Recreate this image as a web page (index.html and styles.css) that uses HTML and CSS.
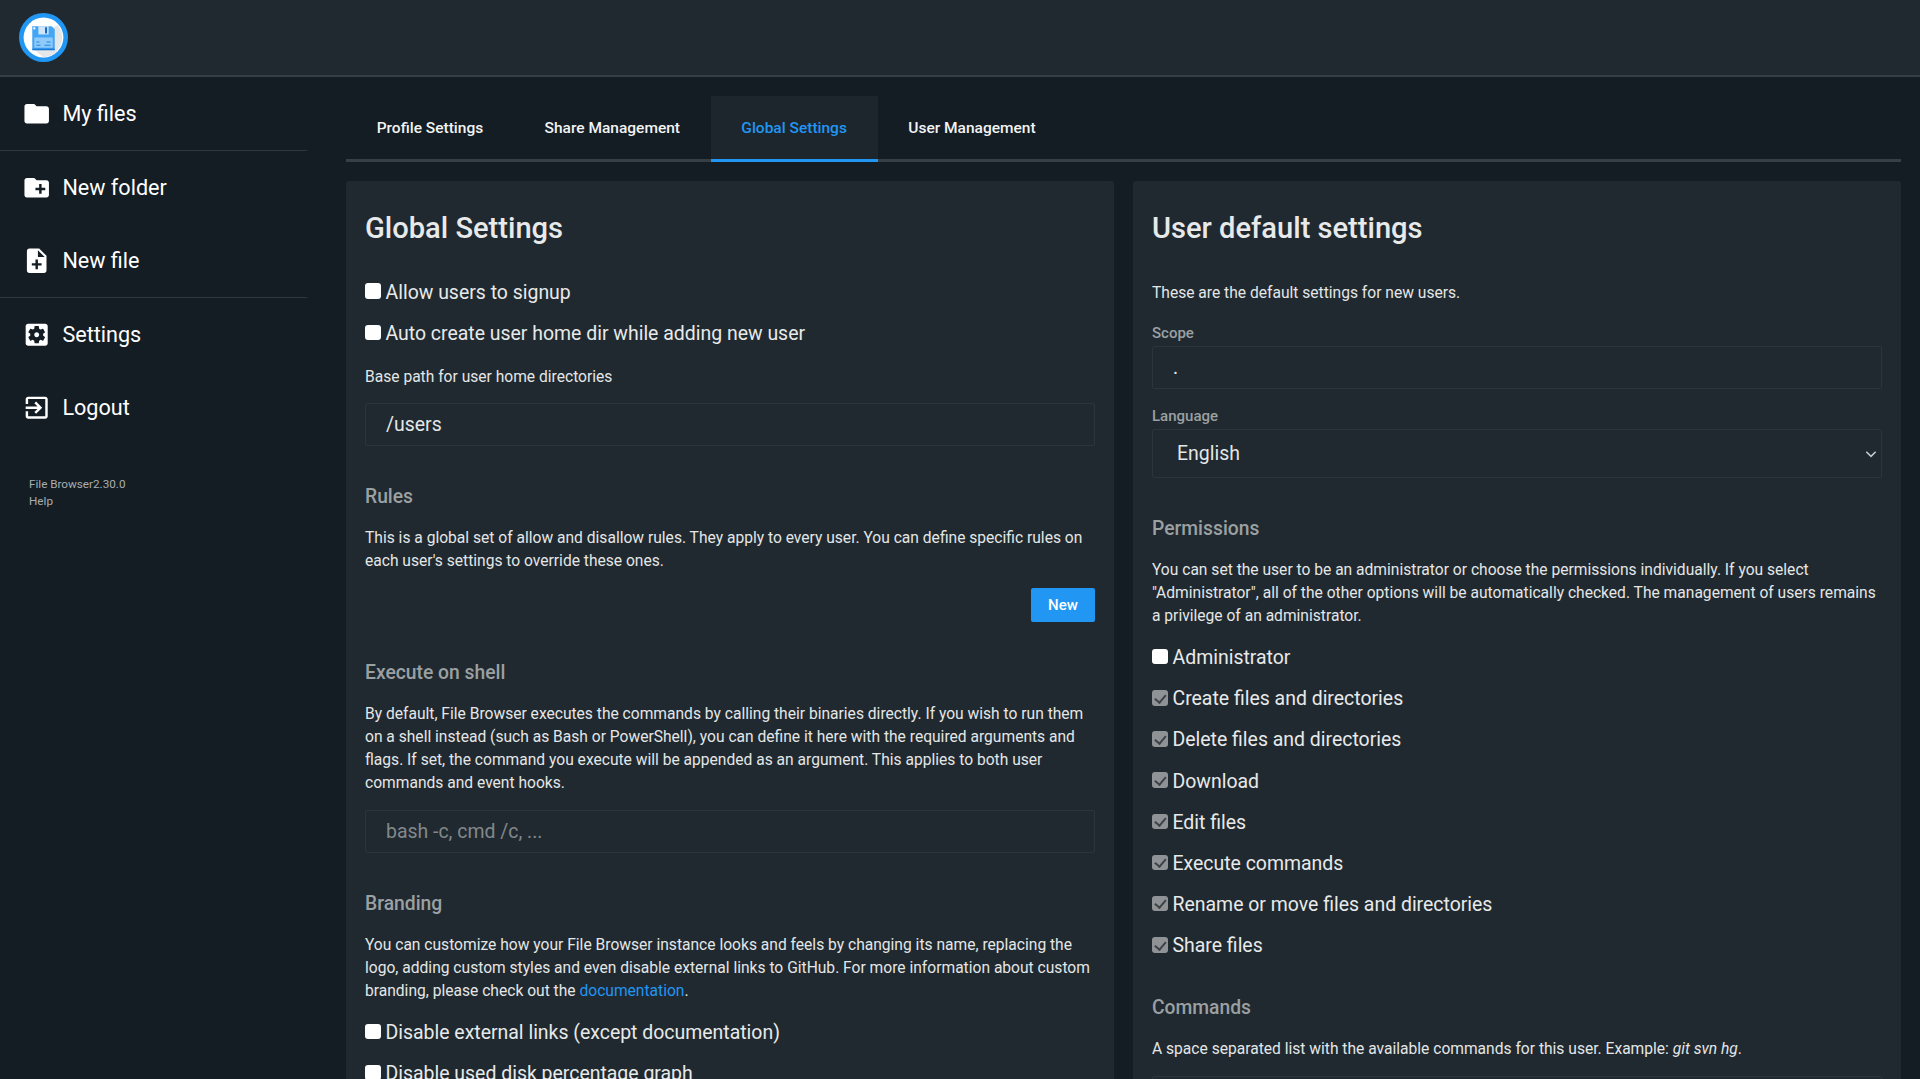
FILE: index.html
```html
<!DOCTYPE html>
<html lang="en">
<head>
    <meta charset="UTF-8">
    <meta name="viewport" content="width=device-width, initial-scale=1.0">
    <title>File Browser - Global Settings</title>
    <link rel="stylesheet" href="styles.css">
</head>
<body>
    <header class="topbar">
        <svg class="logo" viewBox="0 0 48 48">
            <circle cx="24" cy="24" r="24" fill="#2196f3"/>
            <circle cx="24" cy="24" r="19.5" fill="#fff"/>
            <path d="M38 12 A19.5 19.5 0 0 1 24 43.5 L15 36 L35 13z" fill="#e4e6e8"/>
            <path d="M13 13h19l3 3v20H13z" fill="#42a5f5"/>
            <path d="M15 24h18v10H15z" fill="#90caf9"/>
            <path d="M13 35h22v1.500H13z" fill="#1976d2"/>
            <path d="M19 13h10v8H19z" fill="#cfe6fa"/>
            <path d="M25.500 14h2v6h-2z" fill="#1565c0"/>
            <path d="M14 14h2v2h-2z" fill="#fff"/>
            <path d="M17 28h3v1h-3zM27 28h4v1h-4zM17 31h4v1h-4zM25 31h6v1h-6z" fill="#1e88e5"/>
        </svg>
    </header>

    <div class="app">
        <nav class="sidebar">
            <div class="nav-group">
                <a class="nav-item">
                    <svg viewBox="0 0 24 24"><path d="M10 4H4c-1.100 0-1.990.9-1.990 2L2 18c0 1.100.9 2 2 2h16c1.100 0 2-.9 2-2V8c0-1.100-.9-2-2-2h-8l-2-2z"/></svg>
                    <span>My files</span>
                </a>
            </div>
            <div class="nav-group">
                <a class="nav-item">
                    <svg viewBox="0 0 24 24"><path d="M20 6h-8l-2-2H4c-1.110 0-1.990.89-1.990 2L2 18c0 1.110.89 2 2 2h16c1.110 0 2-.89 2-2V8c0-1.110-.89-2-2-2zm-1 8h-3v3h-2v-3h-3v-2h3V9h2v3h3v2z"/></svg>
                    <span>New folder</span>
                </a>
                <a class="nav-item">
                    <svg viewBox="0 0 24 24"><path d="M14 2H6c-1.100 0-1.990.9-1.990 2L4 20c0 1.100.89 2 1.990 2H18c1.100 0 2-.9 2-2V8l-6-6zm2 14h-3v3h-2v-3H8v-2h3v-3h2v3h3v2zm-3-7V3.500L18.500 9H13z"/></svg>
                    <span>New file</span>
                </a>
            </div>
            <div class="nav-group">
                <a class="nav-item">
                    <svg viewBox="0 0 24 24"><path d="M12 10c-1.100 0-2 .9-2 2s.9 2 2 2 2-.9 2-2-.9-2-2-2zm7-7H5c-1.110 0-2 .9-2 2v14c0 1.100.89 2 2 2h14c1.110 0 2-.9 2-2V5c0-1.100-.89-2-2-2zm-1.750 9c0 .23-.02.46-.05.68l1.480 1.160c.13.11.17.3.08.45l-1.400 2.420c-.09.15-.27.21-.43.15l-1.740-.7c-.36.28-.76.51-1.180.69l-.26 1.850c-.03.17-.18.3-.35.3h-2.800c-.17 0-.32-.13-.35-.29l-.26-1.850c-.43-.18-.82-.41-1.180-.69l-1.740.7c-.16.06-.34 0-.43-.15l-1.400-2.420c-.09-.15-.05-.34.08-.45l1.480-1.160c-.03-.23-.05-.46-.05-.69 0-.23.02-.46.05-.68l-1.480-1.160c-.13-.11-.17-.3-.08-.45l1.400-2.420c.09-.15.27-.21.43-.15l1.740.7c.36-.28.76-.51 1.180-.69l.26-1.850c.03-.17.18-.3.35-.3h2.800c.17 0 .32.13.35.29l.26 1.850c.43.18.82.41 1.180.69l1.740-.7c.16-.06.34 0 .43.15l1.400 2.420c.09.15.05.34-.08.45l-1.480 1.160c.03.23.05.46.05.69z"/></svg>
                    <span>Settings</span>
                </a>
                <a class="nav-item">
                    <svg viewBox="0 0 24 24"><path d="M10.090 15.590L11.500 17l5-5-5-5-1.410 1.410L12.670 11H3v2h9.670l-2.580 2.590zM19 3H5c-1.110 0-2 .9-2 2v4h2V5h14v14H5v-4H3v4c0 1.100.89 2 2 2h14c1.100 0 2-.9 2-2V5c0-1.100-.9-2-2-2z"/></svg>
                    <span>Logout</span>
                </a>
                <div class="credits">
                    <div>File Browser2.30.0</div>
                    <div>Help</div>
                </div>
            </div>
        </nav>

        <main class="content">
            <div class="tabs">
                <a class="tab">Profile Settings</a>
                <a class="tab">Share Management</a>
                <a class="tab active">Global Settings</a>
                <a class="tab">User Management</a>
            </div>

            <div class="cards">
                <section class="card">
                    <h2>Global Settings</h2>
                    <div class="checks after-title">
                        <label class="check"><input type="checkbox"> Allow users to signup</label>
                        <label class="check"><input type="checkbox"> Auto create user home dir while adding new user</label>
                    </div>
                    <p class="field-note">Base path for user home directories</p>
                    <input class="text-input base-path" type="text" value="/users">

                    <h3>Rules</h3>
                    <p>This is a global set of allow and disallow rules. They apply to every user. You can define specific rules on each user's settings to override these ones.</p>
                    <div class="actions"><button class="btn">New</button></div>

                    <h3>Execute on shell</h3>
                    <p>By default, File Browser executes the commands by calling their binaries directly. If you wish to run them on a shell instead (such as Bash or PowerShell), you can define it here with the required arguments and flags. If set, the command you execute will be appended as an argument. This applies to both user commands and event hooks.</p>
                    <input class="text-input shell" type="text" placeholder="bash -c, cmd /c, ...">

                    <h3>Branding</h3>
                    <p>You can customize how your File Browser instance looks and feels by changing its name, replacing the logo, adding custom styles and even disable external links to GitHub. For more information about custom branding, please check out the <a class="link">documentation</a>.</p>
                    <div class="checks branding">
                        <label class="check"><input type="checkbox"> Disable external links (except documentation)</label>
                        <label class="check"><input type="checkbox"> Disable used disk percentage graph</label>
                    </div>
                </section>

                <section class="card">
                    <h2>User default settings</h2>
                    <p class="intro">These are the default settings for new users.</p>
                    <label class="field-label scope-label">Scope</label>
                    <input class="text-input" type="text" value=".">
                    <label class="field-label">Language</label>
                    <div class="select">
                        <span>English</span>
                        <svg viewBox="0 0 12 12"><path d="M2 4l4 4 4-4" fill="none" stroke="#c8cbcd" stroke-width="1.300"/></svg>
                    </div>

                    <h3>Permissions</h3>
                    <p>You can set the user to be an administrator or choose the permissions individually. If you select "Administrator", all of the other options will be automatically checked. The management of users remains a privilege of an administrator.</p>
                    <div class="checks perms">
                        <label class="check"><input type="checkbox"> Administrator</label>
                        <label class="check"><input type="checkbox" checked> Create files and directories</label>
                        <label class="check"><input type="checkbox" checked> Delete files and directories</label>
                        <label class="check"><input type="checkbox" checked> Download</label>
                        <label class="check"><input type="checkbox" checked> Edit files</label>
                        <label class="check"><input type="checkbox" checked> Execute commands</label>
                        <label class="check"><input type="checkbox" checked> Rename or move files and directories</label>
                        <label class="check"><input type="checkbox" checked> Share files</label>
                    </div>

                    <h3 class="commands">Commands</h3>
                    <p>A space separated list with the available commands for this user. Example: <i>git svn hg</i>.</p>
                    <input class="text-input commands-input" type="text">
                </section>
            </div>
        </main>
    </div>
</body>
</html>
```

FILE: styles.css
```css
* {
    box-sizing: border-box;
}
html, body {
    height: 100%;
}
body {
    margin: 0;
    overflow: hidden;
    background: #141d24;
    color: #e4e6e7;
    font-family: Roboto, "Noto Sans", sans-serif;
    font-size: 15.6px;
}

/* top bar */
.topbar {
    height: 77px;
    background: #20292f;
    border-bottom: 2px solid #343e43;
    display: flex;
    align-items: center;
    padding-left: 19px;
}
.logo {
    width: 49px;
    height: 49px;
}

/* side nav */
.app {
    display: flex;
    height: calc(100% - 77px);
}
.sidebar {
    width: 307px;
    flex-shrink: 0;
}
.nav-group {
    border-bottom: 1px solid #2d373d;
}
.nav-group:last-child {
    border-bottom: none;
}
.nav-item {
    height: 73px;
    display: flex;
    align-items: center;
    padding-left: 22px;
    color: #fff;
    font-size: 21.6px;
}
.nav-item svg {
    width: 29.4px;
    height: 29.4px;
    fill: #fff;
    margin-right: 11px;
}
.credits {
    padding: 32.3px 0 0 29px;
    font-size: 11.7px;
    line-height: 17px;
    color: #a9adb0;
}

/* tabs */
.content {
    flex: 1;
    padding: 19px 19px 0 39px;
    min-width: 0;
}
.tabs {
    display: flex;
    height: 66px;
    border-bottom: 3px solid #363f44;
}
.tab {
    height: 66px;
    padding: 0 30.7px;
    display: flex;
    align-items: center;
    border-bottom: 3px solid transparent;
    font-size: 15.5px;
    font-weight: 500;
    color: #f2f3f3;
}
.tab.active {
    background: #1d262c;
    color: #2196f3;
    border-bottom-color: #2196f3;
}

/* cards */
.cards {
    display: grid;
    grid-template-columns: 1fr 1fr;
    gap: 19px;
    margin-top: 19px;
}
.card {
    background: #20292f;
    border-radius: 3px;
    padding: 30px 19px 0;
    height: 960px;
}
h2 {
    margin: 0;
    font-size: 29.1px;
    line-height: 34px;
    font-weight: 500;
    color: #e8e9ea;
}
h3 {
    margin: 39px 0 18px;
    font-size: 19.3px;
    line-height: 24px;
    font-weight: 500;
    color: #9ba0a3;
}
p {
    margin: 0;
    line-height: 23px;
    color: #e4e6e7;
}
.link {
    color: #2196f3;
}

/* form bits */
.checks.after-title {
    margin-top: 26.5px;
}
.checks.branding {
    margin-top: 9px;
}
.checks.perms {
    margin-top: 9px;
}
.check {
    height: 41.2px;
    display: flex;
    align-items: center;
    gap: 5px;
    font-size: 19.45px;
    color: #e8e9ea;
}
.check input {
    appearance: none;
    width: 15.5px;
    height: 15.5px;
    margin: -2px 0 0;
    border-radius: 3px;
    background: #fff;
    position: relative;
    flex-shrink: 0;
}
.check input:checked {
    background: #8f9396;
}
.check input:checked::after {
    content: "";
    position: absolute;
    left: 5px;
    top: 1.5px;
    width: 4.5px;
    height: 9px;
    border: solid #3c4347;
    border-width: 0 2px 2px 0;
    transform: rotate(40deg);
}
.field-note {
    margin-top: 12px;
}
.text-input {
    display: block;
    width: 100%;
    height: 43px;
    padding: 0 20px;
    background: #20292f;
    border: 1px solid #2b353a;
    border-radius: 2px;
    outline: none;
    font-family: inherit;
    font-size: 19.45px;
    color: #e4e6e7;
}
.text-input::placeholder {
    color: #83888b;
}
.base-path {
    margin-top: 14px;
}
.shell {
    margin-top: 15px;
}
.actions {
    display: flex;
    justify-content: flex-end;
    margin-top: 15px;
}
.btn {
    width: 64px;
    height: 34px;
    border: none;
    border-radius: 2px;
    background: #2196f3;
    color: #fff;
    font-family: inherit;
    font-size: 15px;
    font-weight: 500;
}
.intro {
    margin-top: 37px;
}
.field-label {
    display: block;
    margin: 16.5px 0 1px;
    line-height: 23px;
    font-size: 15px;
    font-weight: 500;
    color: #9ba0a3;
}
.select {
    height: 49px;
    padding: 0 3px 0 24px;
    border: 1px solid #2b353a;
    border-radius: 2px;
    display: flex;
    align-items: center;
    justify-content: space-between;
    font-size: 19.45px;
}
.select svg {
    width: 14px;
    height: 14px;
}
h3.commands {
    margin-top: 29px;
}
.commands-input {
    margin-top: 15.5px;
}
```
